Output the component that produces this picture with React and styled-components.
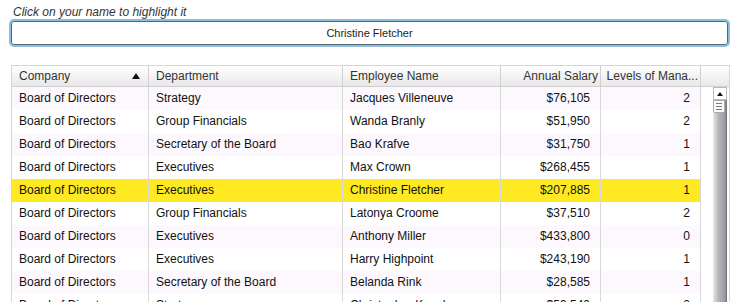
import styled, { createGlobalStyle } from "styled-components";

const GlobalStyle = createGlobalStyle`
  html, body {
    margin: 0;
    padding: 0;
    background: #fff;
    font-family: "Liberation Sans", Arial, sans-serif;
    overflow: hidden;
  }
`;

const Page = styled.div`
  padding: 4px 7px 0 10px;
  display: flex;
  flex-direction: column;
`;

const Hint = styled.div`
  font-style: italic;
  font-size: 12px;
  color: #333;
  margin-left: 3px;
  height: 15px;
  line-height: 16px;
`;

const NameBox = styled.div`
  margin: 2px 0 0 1px;
  width: 715px;
  height: 22px;
  border: 1px solid #5f6468;
  border-radius: 3px;
  box-shadow: 0 0 0 2px #86c0e3;
  display: flex;
  align-items: center;
  justify-content: center;
  font-size: 11px;
  color: #222;
`;

const Grid = styled.div`
  margin: 20px 0 0 1px;
  width: 717px;
  border-top: 1px solid #d6d6d6;
  border-left: 1px solid #d6d6d6;
  border-right: 1px solid #d6d6d6;
  display: flex;
  flex-direction: column;
`;

const HeaderRow = styled.div`
  display: flex;
  height: 20px;
  background: linear-gradient(#ffffff, #e8e8e8);
  border-bottom: 1px solid #cfcfcf;
`;

const HeadCell = styled.div`
  width: ${(p) => p.$w}px;
  flex: none;
  box-sizing: border-box;
  padding: 0 ${(p) => (p.$right ? 2 : 6)}px 0 ${(p) => (p.$right ? 2 : 7)}px;
  border-right: ${(p) => (p.$last ? "none" : "1px solid #cfcfcf")};
  display: flex;
  align-items: center;
  justify-content: ${(p) => (p.$right ? "flex-end" : "space-between")};
  font-size: 12px;
  color: #333;
  white-space: nowrap;
  overflow: hidden;
`;

const SortArrow = styled.span`
  width: 0;
  height: 0;
  border-left: 4px solid transparent;
  border-right: 4px solid transparent;
  border-bottom: 6px solid #111;
  margin-right: 2px;
`;

const Body = styled.div`
  display: flex;
  height: 216px;
  overflow: hidden;
`;

const Rows = styled.div`
  display: flex;
  flex-direction: column;
`;

const Row = styled.div`
  display: flex;
  height: 23px;
  flex: none;
  background: ${(p) => (p.$active ? "#ffe922" : p.$odd ? "#fdf8fd" : "#ffffff")};
`;

const Cell = styled.div`
  width: ${(p) => p.$w}px;
  flex: none;
  box-sizing: border-box;
  padding: 0 ${(p) => (p.$right ? 10 : 7)}px 2px;
  border-right: 1px solid #d8d8d8;
  display: flex;
  align-items: center;
  justify-content: ${(p) => (p.$right ? "flex-end" : "flex-start")};
  font-size: 12px;
  color: #111;
  white-space: nowrap;
  overflow: hidden;
`;

const ScrollCol = styled.div`
  flex: 1;
  padding-left: 12px;
  padding-right: 2px;
  display: flex;
`;

const Track = styled.div`
  width: 14px;
  display: flex;
  flex-direction: column;
  background: linear-gradient(to right, #e8e8ea, #b4b5b9 40%, #9a9ba0 85%, #6c6d72);
`;

const UpButton = styled.div`
  height: 13px;
  background: #fff;
  border: 1px solid #bbb;
  box-sizing: border-box;
  display: flex;
  align-items: center;
  justify-content: center;
`;

const UpArrow = styled.span`
  width: 0;
  height: 0;
  border-left: 3px solid transparent;
  border-right: 3px solid transparent;
  border-bottom: 4px solid #111;
`;

const Thumb = styled.div`
  height: 13px;
  margin-right: 2px;
  background: #fbfbfb;
  border: 1px solid #a8a8a8;
  border-radius: 0 0 2px 2px;
  box-sizing: border-box;
  display: flex;
  flex-direction: column;
  align-items: center;
  justify-content: center;
  gap: 2px;
`;

const Grip = styled.span`
  width: 6px;
  height: 1px;
  background: #777;
`;

const cols = [
  { key: "company", label: "Company", w: 137 },
  { key: "dept", label: "Department", w: 194 },
  { key: "name", label: "Employee Name", w: 158 },
  { key: "salary", label: "Annual Salary", w: 100, right: true },
  { key: "levels", label: "Levels of Mana...", w: 100, right: true },
];

const people = [
  ["Strategy", "Jacques Villeneuve", "$76,105", 2],
  ["Group Financials", "Wanda Branly", "$51,950", 2],
  ["Secretary of the Board", "Bao Krafve", "$31,750", 1],
  ["Executives", "Max Crown", "$268,455", 1],
  ["Executives", "Christine Fletcher", "$207,885", 1],
  ["Group Financials", "Latonya Croome", "$37,510", 2],
  ["Executives", "Anthony Miller", "$433,800", 0],
  ["Executives", "Harry Highpoint", "$243,190", 1],
  ["Secretary of the Board", "Belanda Rink", "$28,585", 1],
  ["Strategy", "Christopher Kench", "$53,540", 2],
];

const selected = "Christine Fletcher";

export default function App() {
  return (
    <>
      <GlobalStyle />
      <Page>
        <Hint>Click on your name to highlight it</Hint>
        <NameBox>{selected}</NameBox>
        <Grid>
          <HeaderRow>
            {cols.map((c) => (
              <HeadCell key={c.key} $w={c.w} $right={c.right}>
                {c.label}
                {c.key === "company" && <SortArrow />}
              </HeadCell>
            ))}
            <HeadCell $w={27} $last />
          </HeaderRow>
          <Body>
            <Rows>
              {people.map(([dept, name, salary, levels], i) => (
                <Row key={name} $odd={i % 2 === 0} $active={name === selected}>
                  <Cell $w={137}>Board of Directors</Cell>
                  <Cell $w={194}>{dept}</Cell>
                  <Cell $w={158}>{name}</Cell>
                  <Cell $w={100} $right>{salary}</Cell>
                  <Cell $w={100} $right>{levels}</Cell>
                </Row>
              ))}
            </Rows>
            <ScrollCol>
              <Track>
                <UpButton>
                  <UpArrow />
                </UpButton>
                <Thumb>
                  <Grip />
                  <Grip />
                  <Grip />
                </Thumb>
              </Track>
            </ScrollCol>
          </Body>
        </Grid>
      </Page>
    </>
  );
}
